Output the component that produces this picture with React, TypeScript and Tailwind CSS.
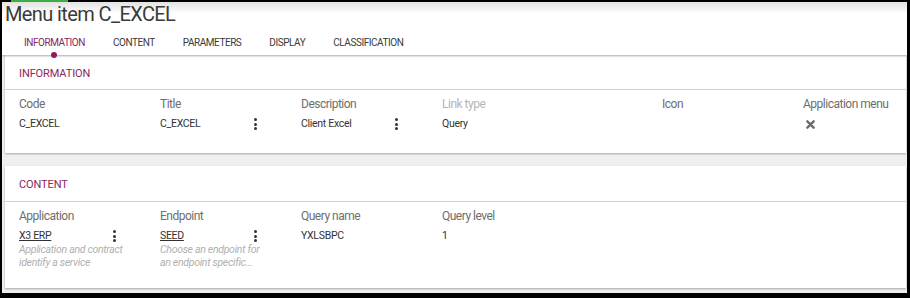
const TABS = ["INFORMATION", "CONTENT", "PARAMETERS", "DISPLAY", "CLASSIFICATION"];

function Kebab() {
  return (
    <span className="flex h-3 w-1 flex-col items-center justify-between">
      <span className="h-[3px] w-[3px] rounded-full bg-[#333]" />
      <span className="h-[3px] w-[3px] rounded-full bg-[#333]" />
      <span className="h-[3px] w-[3px] rounded-full bg-[#333]" />
    </span>
  );
}

function Cross() {
  return (
    <svg width="9" height="9" viewBox="0 0 10 10" className="ml-[3px]">
      <path d="M1.5 1.5 L8.5 8.5 M8.5 1.5 L1.5 8.5" stroke="#6a6a6a" strokeWidth="2.6" strokeLinecap="round" />
    </svg>
  );
}

type FieldProps = {
  label: string;
  value?: string;
  link?: boolean;
  menu?: boolean;
  help?: string[];
  muted?: boolean;
  cross?: boolean;
  width?: string;
};

function Field({ label, value, link, menu, help, muted, cross, width = "w-[141px]" }: FieldProps) {
  return (
    <div className={`${width} shrink-0`}>
      <div
        className={`h-[28px] pt-[7px] text-[12px] leading-[14px] tracking-[-0.5px] ${
          muted ? "text-[#b4b4b4]" : "text-[#6e6e6e]"
        }`}
      >
        {label}
      </div>
      <div className="flex h-[12px] w-[97px] items-center justify-between">
        {cross ? (
          <Cross />
        ) : (
          <span className={`text-[10.5px] leading-[12px] tracking-[-0.3px] text-[#333] ${link ? "underline" : ""}`}>
            {value}
          </span>
        )}
        {menu && <Kebab />}
      </div>
      {help && (
        <div className="mt-[1px] text-[10.5px] italic leading-[13px] tracking-[-0.3px] text-[#b0b0b0]">
          {help.map((h) => (
            <div key={h}>{h}</div>
          ))}
        </div>
      )}
    </div>
  );
}

function Section({
  title,
  titleH,
  children,
  bodyH,
}: {
  title: string;
  titleH: string;
  children: React.ReactNode;
  bodyH: string;
}) {
  return (
    <section className="ml-[3px] mr-[1px] bg-white shadow-[0_1px_2px_rgba(0,0,0,0.3)]">
      <div
        className={`flex ${titleH} items-center border-b border-[#dcc9d5] pl-[14px] pt-[4px] text-[11px] tracking-[-0.1px] text-[#8b2460]`}
      >
        {title}
      </div>
      <div className={`flex ${bodyH} pl-[14px]`}>{children}</div>
    </section>
  );
}

export default function App() {
  return (
    <div className="relative h-[298px] w-[910px] bg-black pb-[5px] pl-[2px] pr-[3px] pt-[2px] font-['Roboto',sans-serif]">
      <span className="absolute left-[11px] top-0 h-[4px] w-[57px] bg-[#3cb043]" />
      <div className="h-full bg-[#efefef]">
        <header className="relative z-10 h-[53px] bg-gradient-to-b from-[#e2e2e2] via-white via-[22%] to-white shadow-[0_1px_2px_rgba(0,0,0,0.35)]">
          <h1 className="pl-[3px] text-[20px] leading-[24px] tracking-[-0.6px] text-[#3a3a3a]">Menu item C_EXCEL</h1>
          <nav className="mt-[11px] flex pl-[8px]">
            {TABS.map((t, i) => (
              <div key={t} className="relative flex flex-col items-center px-[14px]">
                <span
                  className={`text-[10px] leading-[12px] tracking-[-0.45px] ${
                    i === 0 ? "text-[#8b2460]" : "text-[#3a3a3a]"
                  }`}
                >
                  {t}
                </span>
                {i === 0 && <span className="mt-[3px] h-[6px] w-[6px] rounded-full bg-[#8e1a57]" />}
              </div>
            ))}
          </nav>
        </header>
        <Section title="INFORMATION" titleH="h-[35px]" bodyH="h-[63px]">
          <Field label="Code" value="C_EXCEL" />
          <Field label="Title" value="C_EXCEL" menu />
          <Field label="Description" value="Client Excel" menu />
          <Field label="Link type" value="Query" muted width="w-[220px]" />
          <Field label="Icon" width="w-[141px]" />
          <Field label="Application menu" cross width="w-[100px]" />
        </Section>
        <div className="h-[13px]" />
        <Section title="CONTENT" titleH="h-[36px]" bodyH="h-[86px]">
          <Field label="Application" value="X3 ERP" link menu help={["Application and contract", "identify a service"]} />
          <Field label="Endpoint" value="SEED" link menu help={["Choose an endpoint for", "an endpoint specific..."]} />
          <Field label="Query name" value="YXLSBPC" />
          <Field label="Query level" value="1" />
        </Section>
      </div>
    </div>
  );
}
